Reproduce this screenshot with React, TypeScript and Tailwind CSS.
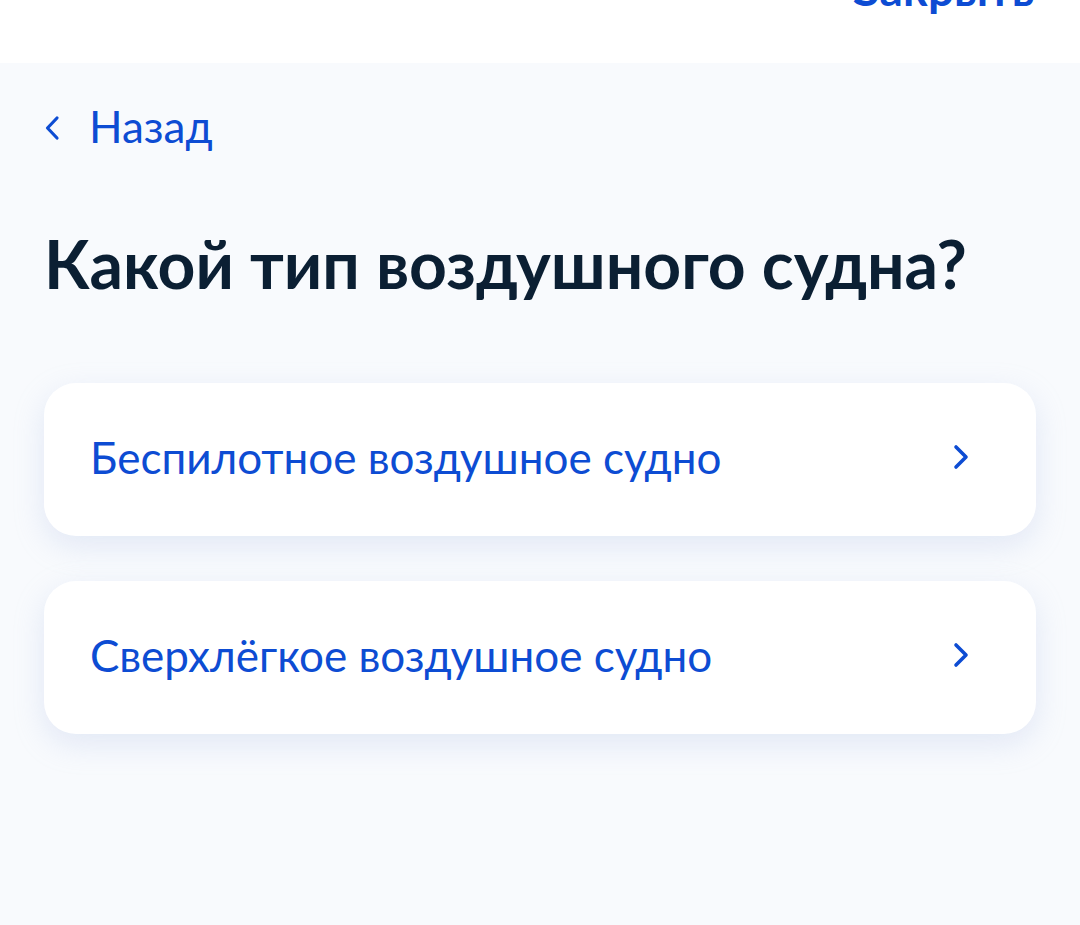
import React from "react";

function Chevron({ dir, className }: { dir: "left" | "right"; className?: string }) {
  return (
    <svg viewBox="0 0 16 26" className={className} fill="none">
      {dir === "right" ? (
        <path d="M3 3 L13 13 L3 23" stroke="#0d4cd3" strokeWidth="3.6" strokeLinecap="round" strokeLinejoin="round" />
      ) : (
        <path d="M13 3 L3.5 13 L13 23" stroke="#0d4cd3" strokeWidth="3.2" strokeLinecap="round" strokeLinejoin="round" />
      )}
    </svg>
  );
}

function Card({ label }: { label: string }) {
  return (
    <div className="flex h-[153px] items-center justify-between rounded-[32px] bg-white pb-[6px] pl-[46px] pr-[67px] shadow-[0_10px_30px_rgba(170,185,225,0.28)]">
      <span className="text-[44px] leading-none text-[#0d4cd3]">{label}</span>
      <Chevron dir="right" className="h-[26px] w-[16px]" />
    </div>
  );
}

export default function App() {
  return (
    <div className="min-h-[925px] w-[1080px] overflow-hidden bg-[#f8fafd]" style={{ fontFamily: "Lato, 'Noto Sans', sans-serif" }}>
      <div className="flex h-[63px] justify-end bg-white pr-[46px]">
        <span className="mt-[-34px] text-[46px] font-bold leading-none text-[#0d4cd3]">Закрыть</span>
      </div>
      <div className="px-[44px]">
        <div className="mt-[41px] flex items-center">
          <Chevron dir="left" className="h-[26px] w-[16px] translate-y-[2px]" />
          <span className="ml-[29px] text-[44px] leading-none text-[#0d4cd3]">Назад</span>
        </div>
        <h1 className="mt-[83px] text-[66px] font-bold leading-none text-[#0b1f33]">Какой тип воздушного судна?</h1>
        <div className="mt-[86px] flex flex-col gap-[45px]">
          <Card label="Беспилотное воздушное судно" />
          <Card label="Сверхлёгкое воздушное судно" />
        </div>
      </div>
    </div>
  );
}
